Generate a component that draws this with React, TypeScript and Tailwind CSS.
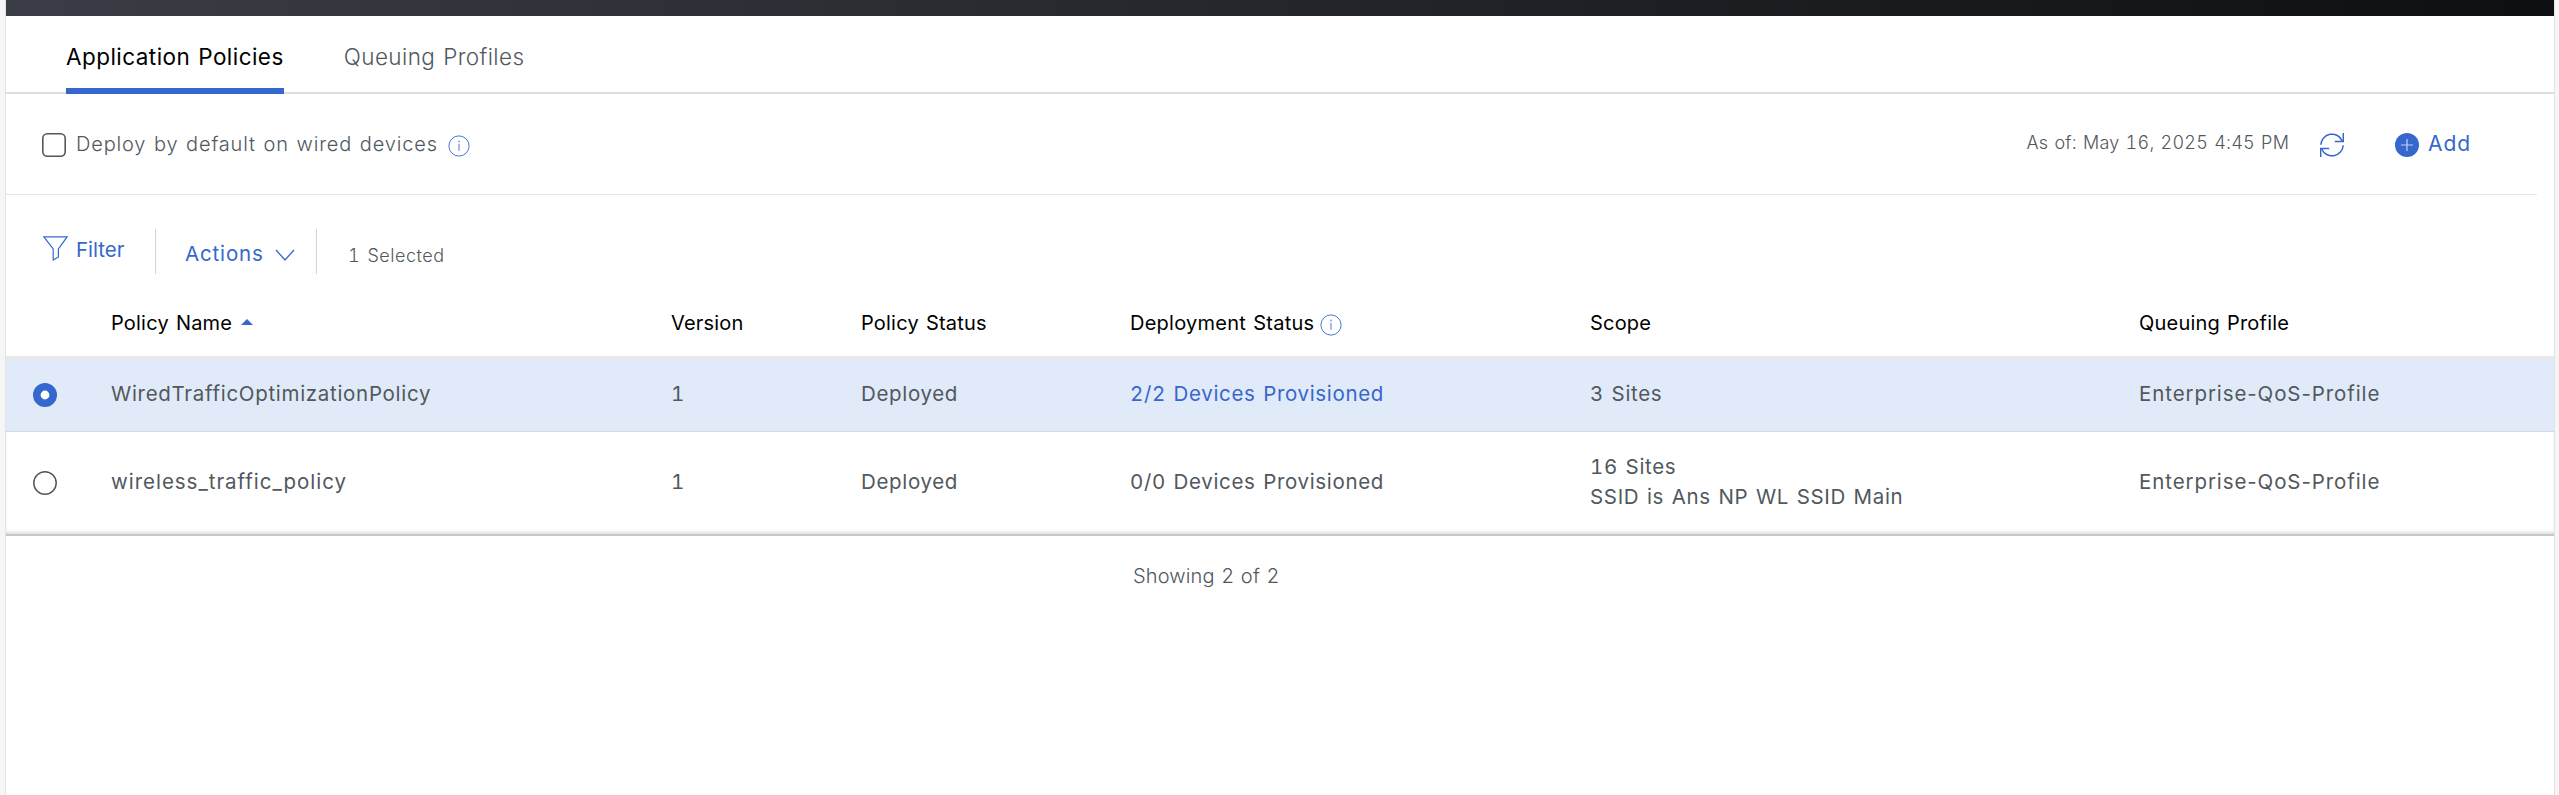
import React from "react";

const cols = "grid grid-cols-[105px_560px_190px_269px_460px_549px_1fr]";
const rowText =
  "items-center text-[20.5px] tracking-[0.66px] [word-spacing:1.5px] [&>div:not(:first-child)]:pb-[2px]";

function Info({ className = "" }: { className?: string }) {
  return (
    <svg viewBox="0 0 22 22" className={"h-[22px] w-[22px] shrink-0 " + className} fill="none" stroke="#3667cc">
      <circle cx="11" cy="11" r="10.1" strokeWidth="0.9" />
      <path d="M11 8.800v7" strokeWidth="0.9" />
      <path d="M11 5.800v1.400" strokeWidth="1.1" />
    </svg>
  );
}

function Radio({ checked = false }: { checked?: boolean }) {
  return (
    <div className="pl-[27px]">
      <svg viewBox="0 0 24 24" className="h-6 w-6">
        {checked ? (
          <circle cx="12" cy="12" r="8.200" fill="#fff" stroke="#3667cc" strokeWidth="7.600" />
        ) : (
          <circle cx="12" cy="12" r="11.2" fill="#fff" stroke="#51585e" strokeWidth="1.5" />
        )}
      </svg>
    </div>
  );
}

export default function App() {
  return (
    <div className="flex h-[795px] w-[2559px] bg-[#f6f6f6] pl-[5px] pr-[4px] font-['Inter','Noto_Sans',sans-serif] text-[20px] leading-[30px] text-[#51585e] tabular-nums">
      <div className="flex w-full flex-col border-x border-[#e2e2e2] bg-white">
        <div className="h-4 shrink-0 bg-linear-to-r from-[#3a3d45] via-[#24262b] to-[#0e0f12]" />

        <nav className="flex h-[78px] shrink-0 gap-[60px] border-b-2 border-[#dedede] pl-[60px] text-[22.5px] [word-spacing:1.5px]">
          <div className="-mb-[2px] flex h-[78px] border-b-6 border-[#3667cc] pt-[26px] tracking-[0.45px] text-black">
            <span>Application Policies</span>
          </div>
          <div className="pt-[26px] font-light tracking-[0.4px]">Queuing Profiles</div>
        </nav>

        <div className="mr-[17px] flex h-[101px] shrink-0 items-center border-b border-[#e6e6e6] pl-9 pt-[2px]">
          <svg viewBox="0 0 24 24" className="h-6 w-6 shrink-0">
            <rect x="0.8" y="0.8" width="22.4" height="22.4" rx="4.500" fill="#fff" stroke="#51585e" strokeWidth="1.6" />
          </svg>
          <span className="mb-[2px] ml-[10px] font-light tracking-[0.83px] [word-spacing:1.5px]">Deploy by default on wired devices</span>
          <Info className="ml-[10px] mt-px" />
          <div className="ml-auto mr-[66px] flex items-center">
            <span className="mb-[4px] text-[18px] font-light tracking-[0.25px] [word-spacing:1px]">As of: May 16, 2025 4:45 PM</span>
            <svg viewBox="0 0 24 24" className="ml-[31px] h-6 w-6" fill="none" stroke="#3667cc" strokeWidth="1.500">
              <path d="M0.800 11.800A11.200 11.200 0 0 1 22.300 8M23.200 12.200A11.200 11.200 0 0 1 1.700 16" />
              <path d="M23.300 0v8.500h-8.500M0.700 24v-8.500h8.500" />
            </svg>
            <svg viewBox="0 0 24 24" className="ml-[51px] h-6 w-6">
              <circle cx="12" cy="12" r="12" fill="#3667cc" />
              <path d="M12 6v12M6 12h12" stroke="#fff" strokeOpacity="0.7" strokeWidth="1.200" />
            </svg>
            <span className="mb-[2px] ml-[9px] text-[21px] tracking-[0.9px] text-[#3667cc]">Add</span>
          </div>
        </div>

        <div className="flex h-[96px] shrink-0 pt-[34px] text-[#3667cc]">
          <div className="flex h-[45px] w-[150px] border-r border-[#d5d5d5] pl-[37px]">
            <svg viewBox="0 0 25 25" className="mt-[7px] h-[25px] w-[25px]" fill="none" stroke="#3667cc" strokeWidth="1.2">
              <path d="M.9.900h23.200L15.400 13v8l-5.200 3v-11z" />
            </svg>
            <span className="ml-[8px] mt-[6px] text-[20.5px]">Filter</span>
          </div>
          <div className="flex h-[45px] w-[161px] border-r border-[#d5d5d5] pl-[29px]">
            <span className="mt-[10px] text-[20.5px] tracking-[0.85px]">Actions</span>
            <svg viewBox="0 0 20 12" className="ml-[11px] mt-[20px] h-3 w-5" fill="none" stroke="#3667cc" strokeWidth="1.3">
              <path d="M1 1l9 10 9-10" />
            </svg>
          </div>
          <span className="ml-[31px] mt-[12px] text-[18px] font-light tracking-[0.5px] text-[#51585e] [word-spacing:2px]">1 Selected</span>
        </div>

        <div className={cols + " h-[68px] shrink-0 border-b-3 border-[#e8e8e8] pt-[17px] tracking-[0.2px] text-black [word-spacing:1.5px]"}>
          <div />
          <div className="flex">
            Policy Name
            <svg viewBox="0 0 12 6" className="ml-[9px] mt-[11px] h-[6px] w-3" fill="#3667cc"><path d="M6 0l6 6H0z" /></svg>
          </div>
          <div>Version</div>
          <div>Policy Status</div>
          <div className="flex tracking-[0.25px]">Deployment Status<Info className="ml-[6px] mt-[6px]" /></div>
          <div>Scope</div>
          <div>Queuing Profile</div>
        </div>

        <div className={cols + " h-[73px] shrink-0 border-b border-[#d3d9e0] bg-[#e1eaf9] " + rowText}>
          <Radio checked />
          <div className="tracking-[0.7px]">WiredTrafficOptimizationPolicy</div>
          <div>1</div>
          <div>Deployed</div>
          <div className="text-[#3667cc]">2/2 Devices Provisioned</div>
          <div>3 Sites</div>
          <div className="tracking-[0.9px] proportional-nums">Enterprise-QoS-Profile</div>
        </div>

        <div className={cols + " h-[104px] shrink-0 border-b-2 border-[#c6c6c6] shadow-[inset_0_-3px_4px_-2px_#00000030] " + rowText}>
          <Radio />
          <div className="tracking-[0.97px]">wireless_traffic_policy</div>
          <div>1</div>
          <div>Deployed</div>
          <div>0/0 Devices Provisioned</div>
          <div>16 Sites<br />SSID is Ans NP WL SSID Main</div>
          <div className="tracking-[0.9px] proportional-nums">Enterprise-QoS-Profile</div>
        </div>
        <div className="pl-[1127px] pt-[25px] font-light tracking-[0.15px] [word-spacing:1px]">Showing 2 of 2</div>
      </div>
    </div>
  );
}
